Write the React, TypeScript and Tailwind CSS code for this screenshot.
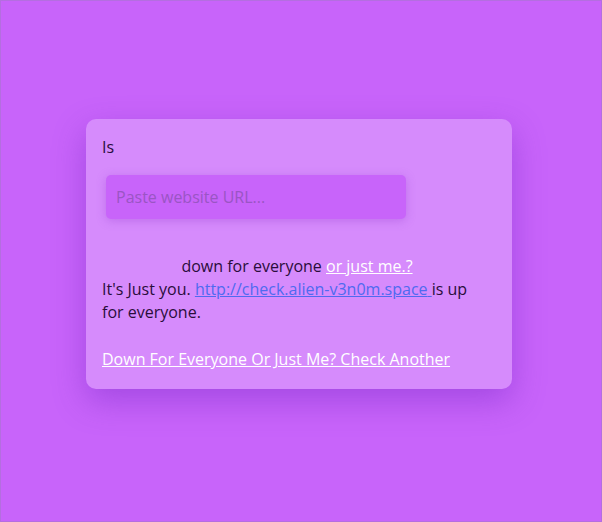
export default function App() {
  return (
    <div
      className="min-h-[522px] bg-[#c864fa] border border-[#b46ee0] flex justify-center pt-[118px] pr-1"
      style={{ fontFamily: '"Open Sans", "Liberation Sans", sans-serif' }}
    >
      <div className="w-[426px] h-[270px] self-start bg-[#d68bfc] rounded-[10px] shadow-[0_12px_32px_rgba(120,40,200,0.45)] pl-4 pr-6 pt-4 pb-4 text-[16px] leading-[23px] text-[#2a0d3b]">
        <p className="leading-6">Is</p>
        <div className="mt-4 ml-1">
          <input
            type="text"
            placeholder="Paste website URL..."
            className="w-[300px] h-[44px] rounded-[5px] bg-[#c864fa] px-[10px] text-base text-[#2a0d3b] placeholder:text-[#9a55c4] shadow-[0_2px_10px_rgba(150,60,210,0.35)] outline-none"
          />
        </div>
        <p className="mt-9 text-center pl-1">
          down for everyone{' '}
          <a href="#" className="text-white underline">
            or just me.?
          </a>
        </p>
        <p>
          It's Just you.{' '}
          <a href="#" className="text-[#4f6af0] underline">
            http://check.alien-v3n0m.space{' '}
          </a>
          is up for everyone.
        </p>
        <p className="mt-6">
          <a href="#" className="text-white underline">
            Down For Everyone Or Just Me? Check Another
          </a>
        </p>
      </div>
    </div>
  );
}
